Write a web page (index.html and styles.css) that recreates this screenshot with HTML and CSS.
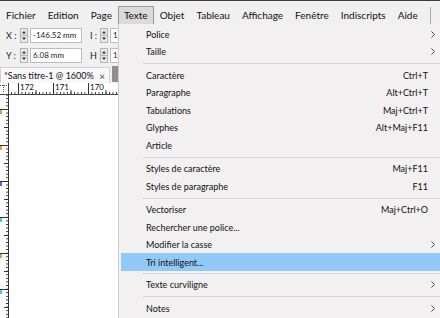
FILE: index.html
```html
<!DOCTYPE html>
<html lang="fr">
<head>
<meta charset="utf-8">
<title>Texte</title>
<link rel="stylesheet" href="styles.css">
</head>
<body>
<div class="topline"></div>
<nav class="menubar">
  <span class="mi">Fichier</span>
  <span class="mi">Edition</span>
  <span class="mi">Page</span>
  <span class="mi active">Texte</span>
  <span class="mi">Objet</span>
  <span class="mi">Tableau</span>
  <span class="mi">Affichage</span>
  <span class="mi">Fenêtre</span>
  <span class="mi">Indiscripts</span>
  <span class="mi">Aide</span>
  <span class="mb-sep"></span>
</nav>
<div class="toolbar">
  <div class="trow">
    <span class="lbl">X :</span>
    <svg class="spin" viewBox="0 0 8 15"><rect x="0.5" y="0.5" width="7" height="14" fill="#e9e9e9" stroke="#b4b4b4"/><line x1="1" y1="7.5" x2="7" y2="7.5" stroke="#b4b4b4"/><path d="M2 5.5 L4 3 L6 5.5 Z" fill="#333"/><path d="M2 9.5 L4 12 L6 9.5 Z" fill="#333"/></svg>
    <span class="inp">-146.52 mm</span>
    <span class="lbl b">I :</span>
    <svg class="spin" viewBox="0 0 8 15"><rect x="0.5" y="0.5" width="7" height="14" fill="#e9e9e9" stroke="#b4b4b4"/><line x1="1" y1="7.5" x2="7" y2="7.5" stroke="#b4b4b4"/><path d="M2 5.5 L4 3 L6 5.5 Z" fill="#333"/><path d="M2 9.5 L4 12 L6 9.5 Z" fill="#333"/></svg>
    <span class="inp cut">12</span>
  </div>
  <div class="trow">
    <span class="lbl">Y :</span>
    <svg class="spin" viewBox="0 0 8 15"><rect x="0.5" y="0.5" width="7" height="14" fill="#e9e9e9" stroke="#b4b4b4"/><line x1="1" y1="7.5" x2="7" y2="7.5" stroke="#b4b4b4"/><path d="M2 5.5 L4 3 L6 5.5 Z" fill="#333"/><path d="M2 9.5 L4 12 L6 9.5 Z" fill="#333"/></svg>
    <span class="inp">6.08 mm</span>
    <span class="lbl b">H :</span>
    <svg class="spin" viewBox="0 0 8 15"><rect x="0.5" y="0.5" width="7" height="14" fill="#e9e9e9" stroke="#b4b4b4"/><line x1="1" y1="7.5" x2="7" y2="7.5" stroke="#b4b4b4"/><path d="M2 5.5 L4 3 L6 5.5 Z" fill="#333"/><path d="M2 9.5 L4 12 L6 9.5 Z" fill="#333"/></svg>
    <span class="inp cut">11</span>
  </div>
</div>
<div class="tabbar">
  <div class="tab"><span class="tt">*Sans titre-1 @ 1600%</span><span class="x">×</span></div>
  <div class="tabscroll"></div>
</div>
<div class="rulerrow">
  <div class="corner"></div>
  <div class="hruler"><span>172</span><span>171</span><span>170</span></div>
</div>
<div class="work">
  <div class="vruler">
    <i class="mk o" style="top:15px"></i>
    <i class="mk o" style="top:51px"></i>
    <i class="mk b" style="top:87px"></i>
    <i class="mk c" style="top:123px"></i>
    <i class="mk o" style="top:159px"></i>
    <i class="mk c" style="top:195px"></i>
  </div>
  <div class="canvas"></div>
</div>

<div class="dropdown">
  <div class="it t"><span class="lab">Police</span><span class="ar"><svg viewBox="0 0 4 7"><path d="M0.5 0.5 L3.5 3.5 L0.5 6.5" fill="none" stroke="#444"/></svg></span></div>
  <div class="it"><span class="lab">Taille</span><span class="ar"><svg viewBox="0 0 4 7"><path d="M0.5 0.5 L3.5 3.5 L0.5 6.5" fill="none" stroke="#444"/></svg></span></div>
  <div class="sep"></div>
  <div class="it t"><span class="lab">Caractère</span><span class="sc">Ctrl+T</span><span class="ar"></span></div>
  <div class="it"><span class="lab">Paragraphe</span><span class="sc">Alt+Ctrl+T</span><span class="ar"></span></div>
  <div class="it t"><span class="lab">Tabulations</span><span class="sc">Maj+Ctrl+T</span><span class="ar"></span></div>
  <div class="it"><span class="lab">Glyphes</span><span class="sc">Alt+Maj+F11</span><span class="ar"></span></div>
  <div class="it t"><span class="lab">Article</span><span class="ar"></span></div>
  <div class="sep"></div>
  <div class="it"><span class="lab">Styles de caractère</span><span class="sc">Maj+F11</span><span class="ar"></span></div>
  <div class="it t"><span class="lab">Styles de paragraphe</span><span class="sc">F11</span><span class="ar"></span></div>
  <div class="sep"></div>
  <div class="it"><span class="lab">Vectoriser</span><span class="sc">Maj+Ctrl+O</span><span class="ar"></span></div>
  <div class="it t"><span class="lab">Rechercher une police...</span><span class="ar"></span></div>
  <div class="it"><span class="lab">Modifier la casse</span><span class="ar"><svg viewBox="0 0 4 7"><path d="M0.5 0.5 L3.5 3.5 L0.5 6.5" fill="none" stroke="#444"/></svg></span></div>
  <div class="it t hl"><span class="lab">Tri intelligent...</span><span class="ar"></span></div>
  <div class="sep n"></div>
  <div class="it"><span class="lab">Texte curviligne</span><span class="ar"><svg viewBox="0 0 4 7"><path d="M0.5 0.5 L3.5 3.5 L0.5 6.5" fill="none" stroke="#444"/></svg></span></div>
  <div class="sep"></div>
  <div class="it t"><span class="lab">Notes</span><span class="ar"><svg viewBox="0 0 4 7"><path d="M0.5 0.5 L3.5 3.5 L0.5 6.5" fill="none" stroke="#444"/></svg></span></div>
</div>
</body>
</html>
```

FILE: styles.css
```css
* { box-sizing: border-box; margin: 0; padding: 0; }
html, body { width: 440px; height: 318px; overflow: hidden; }
body {
  font-family: "Segoe UI", Lato, "Noto Sans", sans-serif;
  color: #111;
  background: #f0f0f0;
  position: relative;
  white-space: nowrap;
}
.topline { height: 1px; background: #3f3f3f; }

.menubar {
  height: 23px;
  display: flex;
  padding-top: 5px;
  font-size: 10px;
  background: #f0f0f0;
}
.mi {
  height: 18px;
  line-height: 17px;
  padding: 0 5px;
  border: 1px solid transparent;
  border-bottom: none;
  color: #111;
}
.mi.active { background: #dadada; border-color: #9a9a9a; }
.mb-sep {
  width: 1px;
  height: 17px;
  margin: 1px 9px 0 auto;
  background: #a8a8a8;
}

.toolbar {
  height: 40px;
  padding: 4px 0 0 6px;
  display: flex;
  flex-direction: column;
  gap: 5px;
  font-size: 9px;
}
.trow { display: flex; align-items: center; height: 15px; }
.lbl { width: 14px; flex: none; color: #222; }
.lbl.b { width: 10px; margin-left: 8px; }
.spin { width: 8px; height: 15px; margin-right: 2px; display: block; flex: none; }
.inp {
  width: 52px;
  height: 15px;
  flex: none;
  overflow: hidden;
  font-size: 8px;
  line-height: 13px;
  padding-left: 2px;
  background: #fff;
  border: 1px solid #bdbdbd;
  color: #222;
}
.inp.cut { width: 30px; }

.tabbar { height: 19px; display: flex; align-items: flex-end; }
.tab {
  width: 110px;
  height: 16px;
  display: flex;
  align-items: center;
  padding-left: 3px;
  font-size: 9px;
  background: #f8f8f8;
  border: 1px solid #d0d0d0;
  border-bottom: none;
}
.tab .tt { overflow: hidden; }
.tab .x { margin-left: auto; margin-right: 4px; font-size: 10px; color: #444; }
.tabscroll { width: 6px; height: 16px; margin: 0 0 1px 2px; background: #8e8e8e; }

.rulerrow {
  height: 12px;
  display: flex;
  background: #fff;
  border-bottom: 1px solid #444;
}
.corner {
  width: 9px;
  border-right: 1px solid #444;
  background:
    repeating-linear-gradient(to right, #555 0 1px, transparent 1px 2px) 0 2px / 8px 1px no-repeat,
    repeating-linear-gradient(to bottom, #555 0 1px, transparent 1px 2px) 3px 2px / 1px 8px no-repeat;
}
.hruler {
  flex: 1;
  display: flex;
  padding-left: 11px;
  font-size: 8px;
  line-height: 9px;
  color: #111;
  background-image:
    linear-gradient(to right, #333 0 1px, transparent 1px),
    linear-gradient(to right, #333 0 1px, transparent 1px),
    linear-gradient(to right, #333 0 1px, transparent 1px);
  background-size: 35px 100%, 17.5px 4px, 3.5px 2px;
  background-position: 9px 0, 9px 100%, 9px 100%;
  background-repeat: repeat-x;
}
.hruler span { width: 35px; flex: none; }

.work { display: flex; height: 223px; }
.vruler {
  width: 9px;
  position: relative;
  border-right: 1px solid #333;
  background-color: #fff;
  background-image:
    linear-gradient(#333 0 1px, transparent 1px),
    linear-gradient(#333 0 1px, transparent 1px),
    linear-gradient(#333 0 1px, transparent 1px);
  background-size: 100% 36px, 4px 18px, 2px 3.6px;
  background-position: 0 14px, 100% 14px, 100% 14px;
  background-repeat: repeat-y;
}
.mk { position: absolute; left: 0; width: 2px; height: 4px; }
.mk.o { background: #e59a3c; }
.mk.b { background: #4a6fd0; }
.mk.c { background: #4fc3f0; }
.canvas { flex: 1; background: #fff; }

.dropdown {
  position: absolute;
  left: 118px;
  top: 24px;
  right: 0;
  bottom: 0;
  padding: 1px 0 0 2px;
  background: #f2f0f0;
  border-left: 1px solid #cdcdcd;
  font-size: 9px;
  color: #111;
}
.it {
  height: 17px;
  display: flex;
  align-items: center;
  padding-left: 25px;
}
.it.t { height: 18px; }
.it.hl { background: #91c9f7; }
.lab { flex: 1; }
.ar { width: 12px; display: flex; align-items: center; padding-left: 3px; }
.ar svg { width: 4px; height: 7px; display: block; }
.sep {
  height: 6px;
  margin-left: 22px;
  background: linear-gradient(#d6d6d6, #d6d6d6) 0 3px / 100% 1px no-repeat;
}
.sep.n { height: 5px; background-position: 0 2px; }
```
